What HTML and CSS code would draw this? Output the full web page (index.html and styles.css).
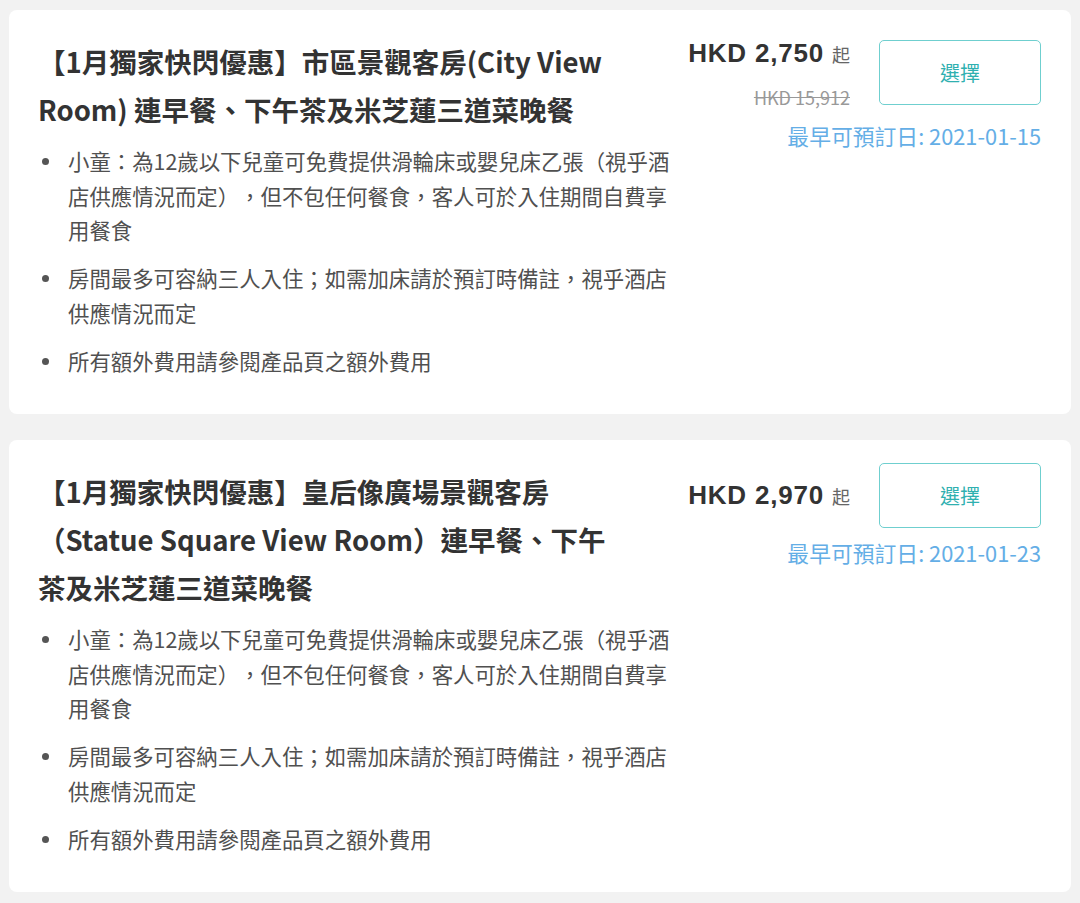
FILE: index.html
```html
<!DOCTYPE html>
<html lang="zh-Hant">
<head>
  <meta charset="UTF-8">
  <title>客房方案</title>
  <link rel="stylesheet" href="styles.css">
</head>
<body>
  <div class="card">
    <div class="info">
      <h2 class="title">【1月獨家快閃優惠】市區景觀客房(City View Room) 連早餐、下午茶及米芝蓮三道菜晚餐</h2>
      <ul class="notes">
        <li>小童：為12歲以下兒童可免費提供滑輪床或嬰兒床乙張（視乎酒店供應情況而定），但不包任何餐食，客人可於入住期間自費享用餐食</li>
        <li>房間最多可容納三人入住；如需加床請於預訂時備註，視乎酒店供應情況而定</li>
        <li>所有額外費用請參閱產品頁之額外費用</li>
      </ul>
    </div>
    <div class="side">
      <div class="buy-row">
        <div class="price-box">
          <div class="price">HKD 2,750 <span class="from">起</span></div>
          <div class="old-price">HKD 15,912</div>
        </div>
        <button class="select-btn">選擇</button>
      </div>
      <div class="earliest">最早可預訂日: 2021-01-15</div>
    </div>
  </div>

  <div class="card">
    <div class="info">
      <h2 class="title">【1月獨家快閃優惠】皇后像廣場景觀客房（Statue Square View Room）連早餐、下午茶及米芝蓮三道菜晚餐</h2>
      <ul class="notes">
        <li>小童：為12歲以下兒童可免費提供滑輪床或嬰兒床乙張（視乎酒店供應情況而定），但不包任何餐食，客人可於入住期間自費享用餐食</li>
        <li>房間最多可容納三人入住；如需加床請於預訂時備註，視乎酒店供應情況而定</li>
        <li>所有額外費用請參閱產品頁之額外費用</li>
      </ul>
    </div>
    <div class="side">
      <div class="buy-row">
        <div class="price-box">
          <div class="price">HKD 2,970 <span class="from">起</span></div>
        </div>
        <button class="select-btn">選擇</button>
      </div>
      <div class="earliest">最早可預訂日: 2021-01-23</div>
    </div>
  </div>
</body>
</html>
```

FILE: styles.css
```css
body {
  margin: 0;
  padding: 10px 9px 0 9px;
  background-color: #f2f2f2;
  font-family: "Noto Sans CJK TC", "Noto Sans", sans-serif;
  color: #333;
  text-spacing-trim: space-all;
}

.card {
  display: flex;
  background-color: #fff;
  border-radius: 8px;
  padding: 23px 30px 36px 29px;
  margin-bottom: 26px;
}

.info {
  flex: 0 0 642px;
  padding-top: 4px;
}

.title {
  margin: 0;
  width: 582px;
  font-size: 27.5px;
  line-height: 48px;
  font-weight: 700;
  color: #333;
}

.notes {
  list-style: none;
  margin: 11px 0 0 0;
  padding: 0;
}

.notes li {
  position: relative;
  padding-left: 30px;
  font-size: 21.4px;
  line-height: 34.5px;
  color: #505050;
  margin-bottom: 13.5px;
}

.notes li:last-child {
  margin-bottom: 0;
}

.notes li::before {
  content: "";
  position: absolute;
  left: 4px;
  top: 14px;
  width: 7px;
  height: 7px;
  border-radius: 50%;
  background-color: #555;
}

.side {
  flex: 1;
  display: flex;
  flex-direction: column;
  align-items: flex-end;
}

.buy-row {
  display: flex;
  align-items: center;
  gap: 29px;
}

.price-box {
  text-align: right;
}

.price {
  font-family: "Liberation Sans", Arial, sans-serif;
  font-weight: 700;
  font-size: 26px;
  letter-spacing: 0.8px;
  line-height: 40px;
  color: #333;
}

.from {
  font-family: "Noto Sans CJK TC", sans-serif;
  font-weight: 400;
  font-size: 18px;
  letter-spacing: 0;
  color: #666;
}

.old-price {
  margin-top: 9px;
  font-size: 18px;
  line-height: 28px;
  color: #999;
  text-decoration: line-through;
}

.select-btn {
  width: 162px;
  height: 65px;
  background-color: #fff;
  border: 1.5px solid #6fcfcf;
  border-radius: 5px;
  color: #2fb0b0;
  font-family: "Noto Sans CJK TC", sans-serif;
  font-size: 20px;
  cursor: pointer;
}

.earliest {
  margin-top: 10px;
  font-size: 21.8px;
  line-height: 30px;
  color: #64aee6;
}
```
